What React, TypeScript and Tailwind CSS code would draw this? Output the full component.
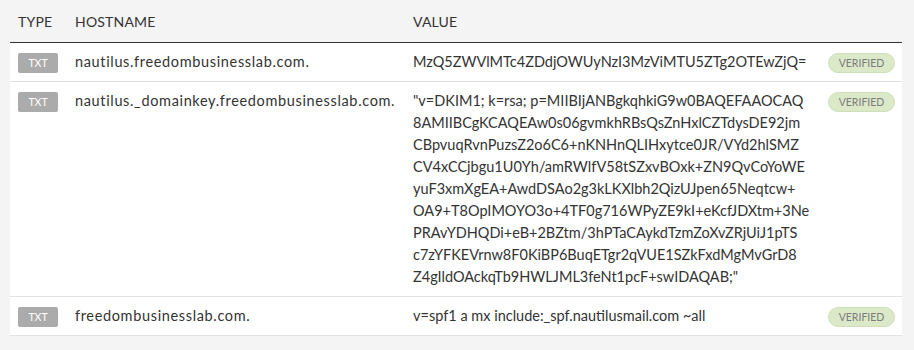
const rows = [
  {
    type: 'TXT',
    host: 'nautilus.freedombusinesslab.com.',
    value: ['MzQ5ZWVlMTc4ZDdjOWUyNzI3MzViMTU5ZTg2OTEwZjQ='],
  },
  {
    type: 'TXT',
    host: 'nautilus._domainkey.freedombusinesslab.com.',
    value: [
      '"v=DKIM1; k=rsa; p=MIIBIjANBgkqhkiG9w0BAQEFAAOCAQ',
      '8AMIIBCgKCAQEAw0s06gvmkhRBsQsZnHxlCZTdysDE92jm',
      'CBpvuqRvnPuzsZ2o6C6+nKNHnQLIHxytce0JR/VYd2hlSMZ',
      'CV4xCCjbgu1U0Yh/amRWlfV58tSZxvBOxk+ZN9QvCoYoWE',
      'yuF3xmXgEA+AwdDSAo2g3kLKXlbh2QizUJpen65Neqtcw+',
      'OA9+T8OpIMOYO3o+4TF0g716WPyZE9kI+eKcfJDXtm+3Ne',
      'PRAvYDHQDi+eB+2BZtm/3hPTaCAykdTzmZoXvZRjUiJ1pTS',
      'c7zYFKEVrnw8F0KiBP6BuqETgr2qVUE1SZkFxdMgMvGrD8',
      'Z4gIldOAckqTb9HWLJML3feNt1pcF+swIDAQAB;"',
    ],
  },
  {
    type: 'TXT',
    host: 'freedombusinesslab.com.',
    value: ['v=spf1 a mx include:_spf.nautilusmail.com ~all'],
  },
]

const cols = 'grid grid-cols-[57px_338px_415px_1fr]'

export default function App() {
  return (
    <div className="h-[350px] w-[914px] bg-[#f4f4f4] font-['Lato',sans-serif] text-[#333]">
      <div className="ml-[10px] w-[892px]">
        <div className={`${cols} h-[43px] items-center border-b border-[#333] text-[14px] uppercase tracking-[0.2px]`}>
          <div className="pl-2">Type</div>
          <div className="pl-2">Hostname</div>
          <div className="pl-2">Value</div>
          <div />
        </div>
        {rows.map((r) => (
          <div key={r.host} className={`${cols} border-b border-[#e2e2e2] bg-white text-[14.5px] leading-[22px]`}>
            <div className="pl-2 pt-[10px]">
              <span className="flex h-5 w-10 items-center justify-center rounded-[2px] bg-[#ababab] text-[10.5px] text-white">
                {r.type}
              </span>
            </div>
            <div className="px-2 py-2 tracking-[0.65px]">{r.host}</div>
            <div className="px-2 py-2">
              {r.value.map((line) => (
                <div key={line}>{line}</div>
              ))}
            </div>
            <div className="pl-2 pt-[10px]">
              <span className="flex h-5 w-[67px] items-center justify-center rounded-full border border-[#cfe0b8] bg-[#dce9c9] text-[10.5px] text-[#7b7b7b]">
                VERIFIED
              </span>
            </div>
          </div>
        ))}
      </div>
    </div>
  )
}
